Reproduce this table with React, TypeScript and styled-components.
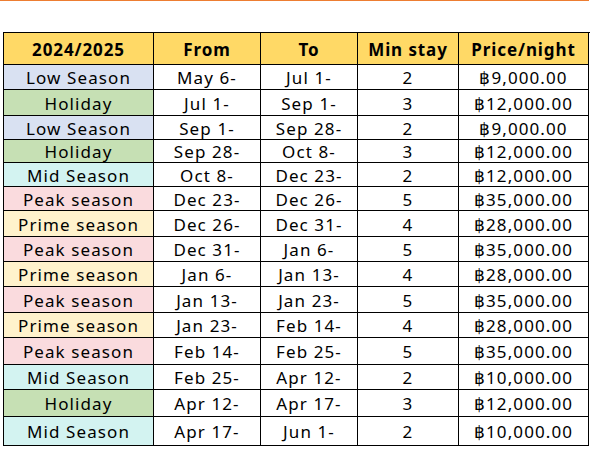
import React from "react";
import styled, { createGlobalStyle } from "styled-components";

const Global = createGlobalStyle`
  html, body { margin: 0; padding: 0; background: #fff; }
  body { font-family: "Noto Sans", "Noto Sans CJK KR", sans-serif; color: #000; }
`;

const Page = styled.div`
  width: 591px;
  height: 450px;
  overflow: hidden;
`;

const TopRule = styled.div`
  width: 589px;
  height: 1px;
  background: #ed7d31;
`;

const Sheet = styled.div`
  margin: 31px 0 0 3px;
  width: 586px;
  border-left: 1px solid #000;
  border-top: 1px solid #000;
`;

const Row = styled.div<{ $h: number }>`
  display: grid;
  grid-template-columns: 150px 107px 97px 101px 130px;
  height: ${(p) => p.$h}px;
`;

const Cell = styled.div<{ $bg?: string; $bold?: boolean }>`
  display: flex;
  align-items: center;
  justify-content: center;
  border-right: 1px solid #000;
  border-bottom: 1px solid #000;
  background: ${(p) => p.$bg || "#fff"};
  font-size: 17px;
  letter-spacing: ${(p) => (p.$bold ? "0.9px" : "1.1px")};
  font-weight: ${(p) => (p.$bold ? 700 : 400)};
  padding-top: 1px;
  white-space: nowrap;
  overflow: hidden;
`;

const seasonColors: Record<string, string> = {
  "Low Season": "#d9e1f2",
  Holiday: "#c6e0b4",
  "Mid Season": "#d3f3f1",
  "Peak season": "#fadbde",
  "Prime season": "#fff2cc",
};

const rows: [string, string, string, string, string, number][] = [
  ["Low Season", "May 6-", "Jul 1-", "2", "฿9,000.00", 25],
  ["Holiday", "Jul 1-", "Sep 1-", "3", "฿12,000.00", 26],
  ["Low Season", "Sep 1-", "Sep 28-", "2", "฿9,000.00", 24],
  ["Holiday", "Sep 28-", "Oct 8-", "3", "฿12,000.00", 23],
  ["Mid Season", "Oct 8-", "Dec 23-", "2", "฿12,000.00", 24],
  ["Peak season", "Dec 23-", "Dec 26-", "5", "฿35,000.00", 24],
  ["Prime season", "Dec 26-", "Dec 31-", "4", "฿28,000.00", 26],
  ["Peak season", "Dec 31-", "Jan 6-", "5", "฿35,000.00", 25],
  ["Prime season", "Jan 6-", "Jan 13-", "4", "฿28,000.00", 25],
  ["Peak season", "Jan 13-", "Jan 23-", "5", "฿35,000.00", 26],
  ["Prime season", "Jan 23-", "Feb 14-", "4", "฿28,000.00", 25],
  ["Peak season", "Feb 14-", "Feb 25-", "5", "฿35,000.00", 27],
  ["Mid Season", "Feb 25-", "Apr 12-", "2", "฿10,000.00", 25],
  ["Holiday", "Apr 12-", "Apr 17-", "3", "฿12,000.00", 27],
  ["Mid Season", "Apr 17-", "Jun 1-", "2", "฿10,000.00", 29],
];

const headers = ["2024/2025", "From", "To", "Min stay", "Price/night"];

export default function App() {
  return (
    <Page>
      <Global />
      <TopRule />
      <Sheet>
        <Row $h={32}>
          {headers.map((h) => (
            <Cell key={h} $bg="#ffd966" $bold>
              {h}
            </Cell>
          ))}
        </Row>
        {rows.map((r, i) => (
          <Row key={i} $h={r[5]}>
            <Cell $bg={seasonColors[r[0]]}>{r[0]}</Cell>
            <Cell>{r[1]}</Cell>
            <Cell>{r[2]}</Cell>
            <Cell>{r[3]}</Cell>
            <Cell>{r[4]}</Cell>
          </Row>
        ))}
      </Sheet>
    </Page>
  );
}
